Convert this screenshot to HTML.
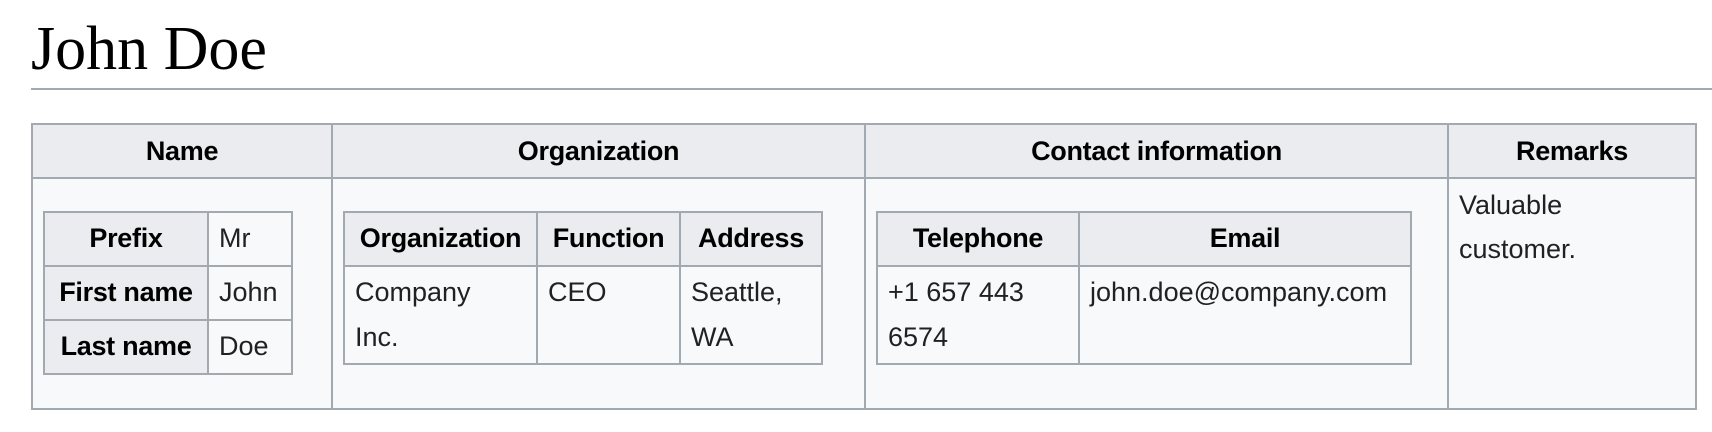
<!DOCTYPE html>
<html><head><meta charset="utf-8"><style>
html,body{margin:0;padding:0;background:#fff;}
body{width:1712px;height:432px;overflow:hidden;position:relative;font-family:"Liberation Sans",Arial,sans-serif;color:#202122;}
h1{position:absolute;left:31px;top:10px;right:0;margin:0;height:78px;line-height:78px;font-family:"Liberation Serif",serif;font-weight:normal;font-size:62px;color:#000;border-bottom:2px solid #a2a9b1;}
table.wt{border-collapse:collapse;background:#f8f9fa;color:#202122;font-size:27px;line-height:44.8px;table-layout:fixed;}
table.wt>tbody>tr>th,table.wt>tbody>tr>td{border:2px solid #a2a9b1;padding:3.6px 10px;}
table.wt>tbody>tr>th{background:#eaecf0;text-align:center;font-weight:bold;color:#000;white-space:nowrap;letter-spacing:-0.3px;}
table.wt>tbody>tr>td{vertical-align:top;}
#outer{position:absolute;left:31px;top:123px;width:1664px;}
table.inner{margin:28px 0 30px;}
</style></head><body>
<h1>John Doe</h1>
<table class="wt" id="outer">
<colgroup><col style="width:300px"><col style="width:533px"><col style="width:583px"><col style="width:248px"></colgroup>
<tbody>
<tr><th>Name</th><th>Organization</th><th>Contact information</th><th>Remarks</th></tr>
<tr>
<td><table class="wt inner" style="width:248px"><colgroup><col style="width:164px"><col style="width:84px"></colgroup><tbody>
<tr><th>Prefix</th><td>Mr</td></tr>
<tr><th>First name</th><td>John</td></tr>
<tr><th>Last name</th><td>Doe</td></tr>
</tbody></table></td>
<td><table class="wt inner" style="width:478px"><colgroup><col style="width:193px"><col style="width:143px"><col style="width:142px"></colgroup><tbody>
<tr><th>Organization</th><th>Function</th><th>Address</th></tr>
<tr><td>Company<br>Inc.</td><td>CEO</td><td>Seattle,<br>WA</td></tr>
</tbody></table></td>
<td><table class="wt inner" style="width:534px"><colgroup><col style="width:202px"><col style="width:332px"></colgroup><tbody>
<tr><th>Telephone</th><th>Email</th></tr>
<tr><td>+1 657 443<br>6574</td><td>john.doe@company.com</td></tr>
</tbody></table></td>
<td>Valuable<br>customer.</td>
</tr>
</tbody></table>
</body></html>
